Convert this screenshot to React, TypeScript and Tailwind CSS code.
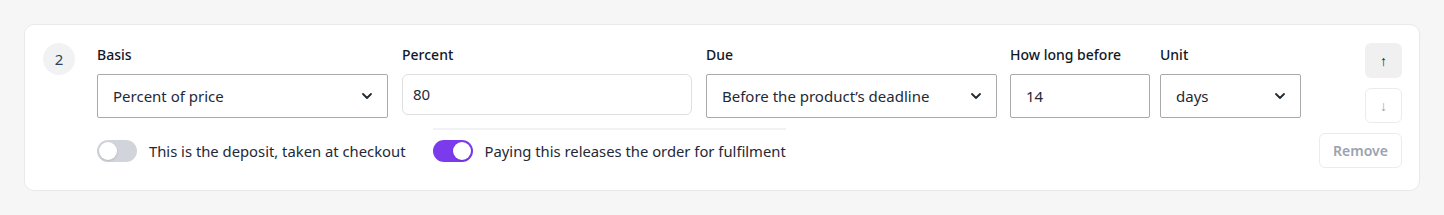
import React from 'react';

const font = { fontFamily: '"Noto Sans", "Open Sans", sans-serif' };

const Chevron = () => (
  <svg width="16" height="16" viewBox="0 0 24 24" fill="none" stroke="#1f2937" strokeWidth="2.75" strokeLinecap="round" strokeLinejoin="round">
    <path d="M6 9l6 6 6-6" />
  </svg>
);

const Field: React.FC<{ label: string; width: string; children: React.ReactNode }> = ({ label, width, children }) => (
  <div className={`flex flex-col ${width}`}>
    <label className="h-[20px] mb-[9px] text-[14px] leading-[20px] font-medium text-[#111827]">{label}</label>
    {children}
  </div>
);

const SelectBox: React.FC<{ value: string }> = ({ value }) => (
  <div className="h-[44px] flex items-center justify-between pl-[15px] pr-[12px] border border-[#a9a9a9] rounded-[2px] bg-white text-[15px] text-[#1f2937]">
    <span>{value}</span>
    <Chevron />
  </div>
);

const Toggle: React.FC<{ on?: boolean }> = ({ on }) => (
  <div className={`w-[40px] h-[22px] rounded-full p-[2px] flex ${on ? 'bg-[#7c3aed] justify-end' : 'bg-[#d1d5db] justify-start'}`}>
    <div className="w-[18px] h-[18px] rounded-full bg-white shadow-sm" />
  </div>
);

export default function App() {
  return (
    <div className="min-h-[215px] bg-[#f5f6f5] pt-[24px] px-[24px]" style={font}>
      <div className="w-[1396px] h-[167px] bg-white border border-[#e8eaea] rounded-[10px] pt-[18px] pl-[18px] pr-[17px] flex">
        <div className="w-[32px] h-[32px] rounded-full bg-[#f1f2f4] flex items-center justify-center text-[15px] text-[#374151]">2</div>
        <div className="ml-[22px] pt-[2px] flex flex-col">
          <div className="flex">
            <Field label="Basis" width="w-[291px]">
              <SelectBox value="Percent of price" />
            </Field>
            <div className="w-[14px]" />
            <Field label="Percent" width="w-[290px]">
              <div className="h-[41px] flex items-center px-[10px] border border-[#dedfe0] rounded-[6px] text-[15px] text-[#1f2937]">80</div>
            </Field>
            <div className="w-[14px]" />
            <Field label="Due" width="w-[291px]">
              <SelectBox value="Before the product’s deadline" />
            </Field>
            <div className="w-[13px]" />
            <Field label="How long before" width="w-[140px]">
              <div className="h-[44px] flex items-center px-[15px] border border-[#a9a9a9] rounded-[2px] text-[15px] text-[#1f2937]">14</div>
            </Field>
            <div className="w-[10px]" />
            <Field label="Unit" width="w-[141px]">
              <SelectBox value="days" />
            </Field>
          </div>
          <div className="flex items-end mt-[10px]">
            <div className="flex items-center gap-[12px] pt-[10px]">
              <Toggle />
              <span className="text-[14.8px] text-[#1f2937]">This is the deposit, taken at checkout</span>
            </div>
            <div className="ml-[27px] flex items-center gap-[12px] pt-[10px] border-t-2 border-[#f1f2f3]">
              <Toggle on />
              <span className="text-[14.8px] text-[#1f2937]">Paying this releases the order for fulfilment</span>
            </div>
          </div>
        </div>
        <div className="ml-auto flex flex-col items-end gap-[10px]">
          <button className="w-[37px] h-[35px] rounded-[6px] bg-[#f0f0f0] flex items-center justify-center text-[14px] text-[#111827]">↑</button>
          <button className="w-[37px] h-[35px] rounded-[6px] border border-[#ececec] bg-white flex items-center justify-center text-[14px] text-[#9ca3af]">↓</button>
          <button className="w-[83px] h-[35px] rounded-[6px] border border-[#ececec] bg-white flex items-center justify-center text-[14px] font-semibold text-[#9ca3af]">Remove</button>
        </div>
      </div>
    </div>
  );
}
